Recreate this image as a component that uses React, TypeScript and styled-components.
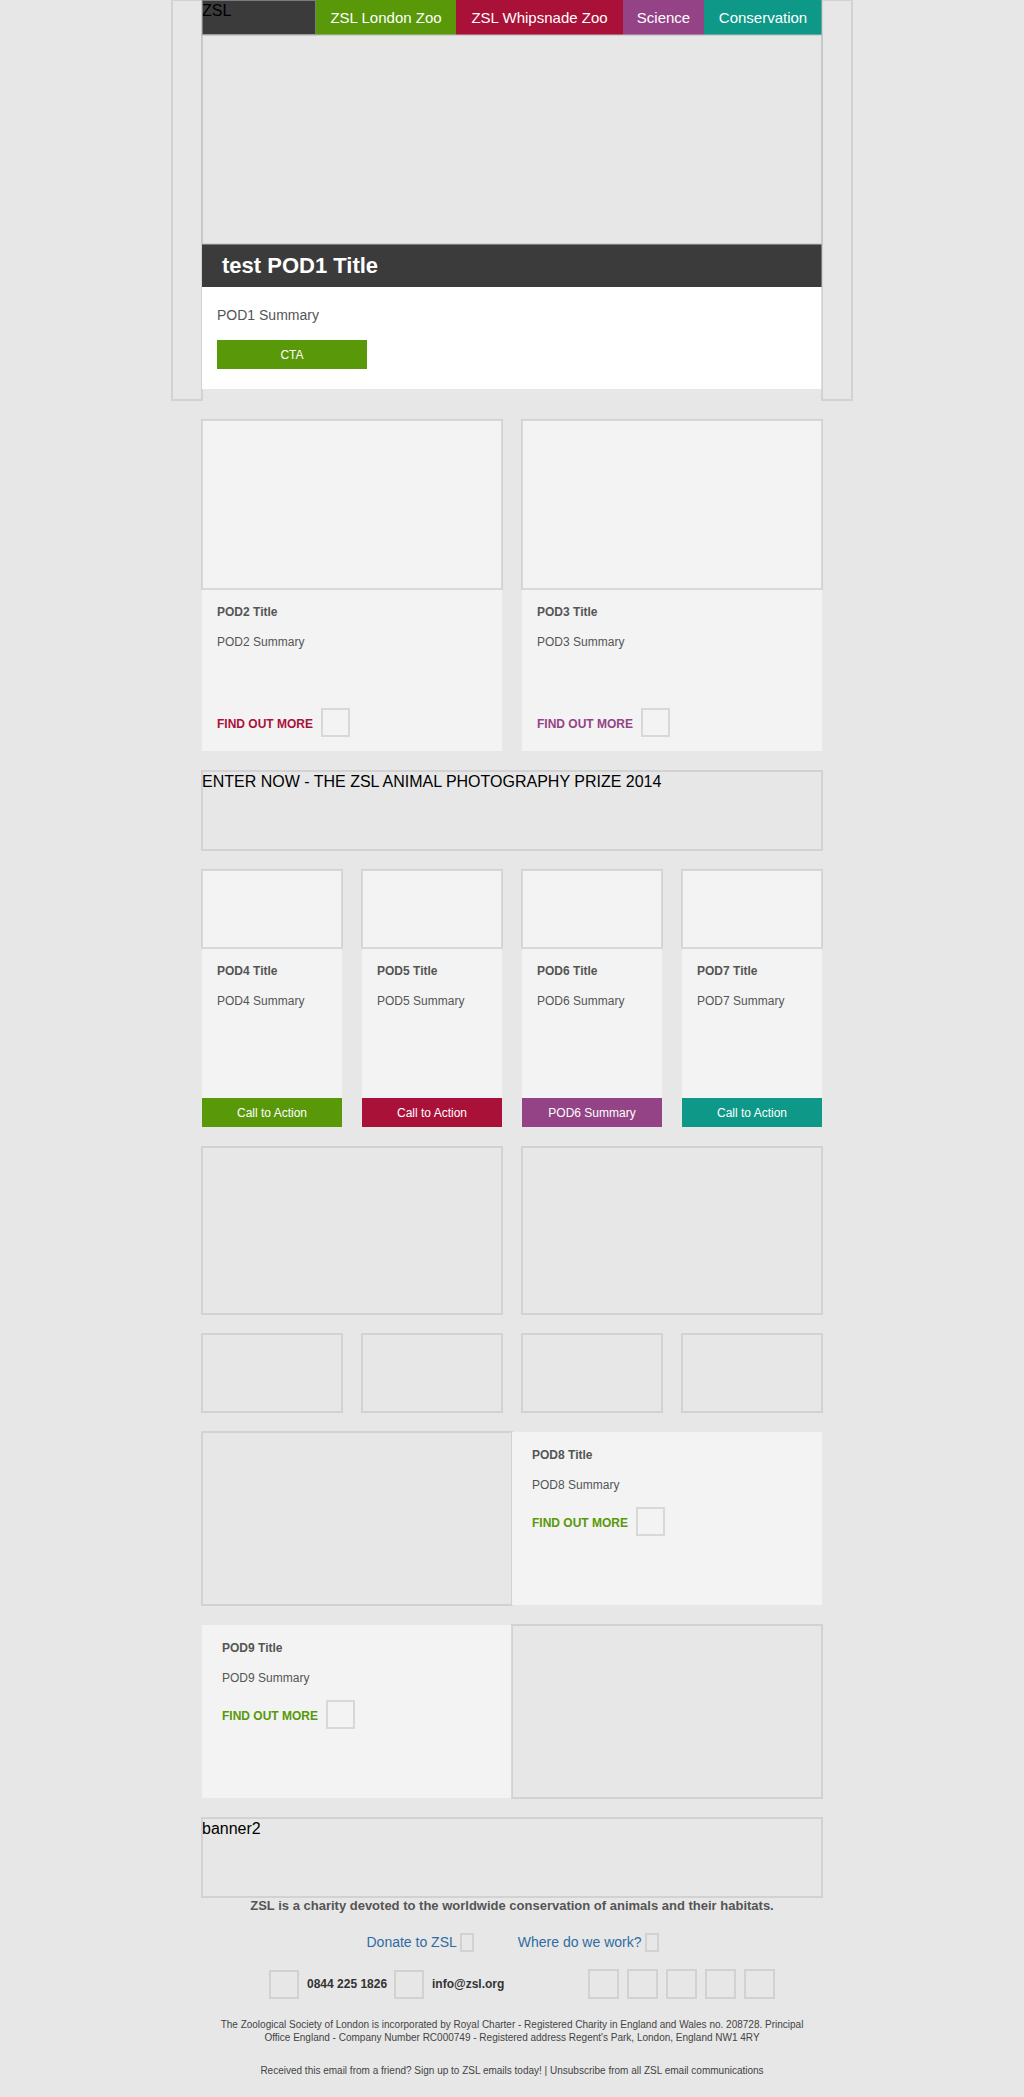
import React from "react";
import styled, { createGlobalStyle } from "styled-components";

const color = {
  page: "#e7e7e7",
  card: "#f3f3f3",
  dark: "#3b3b3b",
  text: "#555555",
  line: "rgba(190, 190, 190, 0.5)",
  link: "#2f6ca3",
  green: "#599809",
  red: "#aa1138",
  purple: "#934386",
  teal: "#0d9888",
};

const GlobalStyle = createGlobalStyle`
  * { box-sizing: border-box; }
  body {
    margin: 0;
    background: ${color.page};
    color: ${color.text};
    font-family: "Liberation Sans", Arial, Helvetica, sans-serif;
    font-size: 12px;
    line-height: 15px;
  }
  a { color: inherit; text-decoration: none; }
  h1, h2, p { margin: 0; }
`;

const Top = styled.header`
  display: grid;
  grid-template-columns: 30px minmax(0, 620px) 30px;
  justify-content: center;
`;

const Picture = styled.div<{ $height: number }>`
  height: ${(p) => p.$height}px;
  outline: 2px solid ${color.line};
  outline-offset: -1px;
  color: #000;
  font-size: 16px;
  line-height: 22px;
`;

const Nav = styled.nav`
  display: grid;
  grid-template-columns: 114fr 140fr 167fr 81fr 118fr;
  background: ${color.dark};
`;

const NavLink = styled.a<{ $bg: string }>`
  display: flex;
  align-items: center;
  justify-content: center;
  background: ${(p) => p.$bg};
  color: #fff;
  font-size: 15px;
  white-space: nowrap;
`;

const HeroTitle = styled.h1`
  padding: 0 20px;
  background: ${color.dark};
  color: #fff;
  font-size: 22px;
  line-height: 43px;
`;

const HeroBody = styled.div`
  display: flex;
  flex-direction: column;
  align-items: flex-start;
  gap: 17px;
  padding: 20px 15px;
  background: #fff;
`;

const HeroSummary = styled.p`
  font-size: 14px;
  line-height: 16px;
`;

const Button = styled.a<{ $bg: string; $width?: string }>`
  display: block;
  width: ${(p) => p.$width ?? "auto"};
  padding: 8px 0 6px;
  background: ${(p) => p.$bg};
  color: #fff;
  text-align: center;
`;

const Main = styled.main`
  display: grid;
  gap: 20px;
  max-width: 620px;
  margin: 20px auto 0;
`;

const Columns = styled.div<{ $count: number; $gap?: number }>`
  display: grid;
  grid-template-columns: repeat(${(p) => p.$count}, minmax(0, 1fr));
  gap: ${(p) => p.$gap ?? 20}px;
`;

const Card = styled.article<{ $min?: number }>`
  display: flex;
  flex-direction: column;
  min-height: ${(p) => p.$min ?? 0}px;
  background: ${color.card};
`;

const CardBody = styled.div<{ $side?: number; $spread?: boolean }>`
  display: flex;
  flex: 1;
  flex-direction: column;
  gap: 15px;
  padding: 16px ${(p) => p.$side ?? 15}px 15px;

  & > :last-child {
    margin-top: ${(p) => (p.$spread ? "auto" : "0")};
  }
`;

const CardTitle = styled.h2`
  font-size: 12px;
`;

const MoreLink = styled.a<{ $color: string }>`
  display: flex;
  align-items: center;
  gap: 9px;
  color: ${(p) => p.$color};
  font-weight: bold;

  span {
    padding-top: 3px;
  }
`;

const Icon = styled.i<{ $w: number; $h: number }>`
  flex: none;
  width: ${(p) => p.$w}px;
  height: ${(p) => p.$h}px;
  outline: 2px solid ${color.line};
  outline-offset: -1px;
`;

const Footer = styled.footer`
  max-width: 620px;
  margin: 0 auto;
  padding-bottom: 20px;
  text-align: center;
`;

const Mission = styled.p`
  font-size: 13px;
  font-weight: bold;
  line-height: 18px;
`;

const LinkRow = styled.div`
  display: flex;
  flex-wrap: wrap;
  justify-content: center;
  gap: 45px;
  margin-top: 18px;
`;

const FooterLink = styled.a`
  display: flex;
  align-items: center;
  gap: 4px;
  color: ${color.link};
  font-size: 14px;
  line-height: 18px;
`;

const ContactRow = styled.div`
  display: flex;
  flex-wrap: wrap;
  justify-content: space-between;
  gap: 10px;
  margin-top: 19px;
  padding: 0 48px 0 68px;
`;

const Contacts = styled.div`
  display: grid;
  grid-template-columns: 125px auto;
`;

const Contact = styled.a`
  display: flex;
  align-items: center;
  gap: 9px;
  color: #333;
  font-weight: bold;
`;

const Social = styled.div`
  display: flex;
  gap: 10px;
`;

const Legal = styled.p`
  margin-top: 20px;
  padding: 0 6px;
  color: #444;
  font-size: 10px;
  line-height: 13px;
`;

function FindOutMore({ tone }: { tone: string }) {
  return (
    <MoreLink href="#" $color={tone}>
      <span>FIND OUT MORE</span>
      <Icon $w={27} $h={27} />
    </MoreLink>
  );
}

function PodText({ n }: { n: number }) {
  return (
    <>
      <CardTitle>POD{n} Title</CardTitle>
      <p>POD{n} Summary</p>
    </>
  );
}

const smallPods = [
  { n: 4, bg: color.green, label: "Call to Action" },
  { n: 5, bg: color.red, label: "Call to Action" },
  { n: 6, bg: color.purple, label: "POD6 Summary" },
  { n: 7, bg: color.teal, label: "Call to Action" },
];

export default function App() {
  return (
    <>
      <GlobalStyle />
      <Top>
        <Picture $height={400} />
        <div>
          <Nav>
            <Picture $height={35}>ZSL</Picture>
            <NavLink href="#" $bg={color.green}>ZSL London Zoo</NavLink>
            <NavLink href="#" $bg={color.red}>ZSL Whipsnade Zoo</NavLink>
            <NavLink href="#" $bg={color.purple}>Science</NavLink>
            <NavLink href="#" $bg={color.teal}>Conservation</NavLink>
          </Nav>
          <Picture $height={209} />
          <HeroTitle>test POD1 Title</HeroTitle>
          <HeroBody>
            <HeroSummary>POD1 Summary</HeroSummary>
            <Button href="#" $bg={color.green} $width="150px">CTA</Button>
          </HeroBody>
        </div>
        <Picture $height={400} />
      </Top>

      <Main>
        <Columns $count={2}>
          {[
            { n: 2, tone: color.red },
            { n: 3, tone: color.purple },
          ].map(({ n, tone }) => (
            <Card key={n} $min={331}>
              <Picture $height={169} />
              <CardBody $spread>
                <PodText n={n} />
                <FindOutMore tone={tone} />
              </CardBody>
            </Card>
          ))}
        </Columns>

        <Picture $height={79}>ENTER NOW - THE ZSL ANIMAL PHOTOGRAPHY PRIZE 2014</Picture>

        <Columns $count={4}>
          {smallPods.map(({ n, bg, label }) => (
            <Card key={n} $min={257}>
              <Picture $height={78} />
              <CardBody>
                <PodText n={n} />
              </CardBody>
              <Button href="#" $bg={bg}>{label}</Button>
            </Card>
          ))}
        </Columns>

        <Columns $count={2}>
          <Picture $height={167} />
          <Picture $height={167} />
        </Columns>

        <Columns $count={4}>
          {smallPods.map(({ n }) => (
            <Picture key={n} $height={78} />
          ))}
        </Columns>

        <Columns $count={2} $gap={0}>
          <Picture $height={173} />
          <Card>
            <CardBody $side={20}>
              <PodText n={8} />
              <FindOutMore tone={color.green} />
            </CardBody>
          </Card>
        </Columns>

        <Columns $count={2} $gap={0}>
          <Card>
            <CardBody $side={20}>
              <PodText n={9} />
              <FindOutMore tone={color.green} />
            </CardBody>
          </Card>
          <Picture $height={173} />
        </Columns>

        <Picture $height={79}>banner2</Picture>
      </Main>

      <Footer>
        <Mission>
          ZSL is a charity devoted to the worldwide conservation of animals and their habitats.
        </Mission>
        <LinkRow>
          <FooterLink href="#">Donate to ZSL<Icon $w={12} $h={17} /></FooterLink>
          <FooterLink href="#">Where do we work?<Icon $w={12} $h={17} /></FooterLink>
        </LinkRow>
        <ContactRow>
          <Contacts>
            <Contact href="#"><Icon $w={28} $h={27} />0844 225 1826</Contact>
            <Contact href="#"><Icon $w={28} $h={27} />info@zsl.org</Contact>
          </Contacts>
          <Social>
            {[1, 2, 3, 4, 5].map((n) => (
              <Icon as="a" href="#" key={n} $w={29} $h={28} />
            ))}
          </Social>
        </ContactRow>
        <Legal>
          The Zoological Society of London is incorporated by Royal Charter - Registered Charity in
          England and Wales no. 208728. Principal Office England - Company Number RC000749 -
          Registered address Regent's Park, London, England NW1 4RY
        </Legal>
        <Legal>
          Received this email from a friend? <a href="#">Sign up to ZSL emails today!</a> |{" "}
          <a href="#">Unsubscribe from all ZSL email communications</a>
        </Legal>
      </Footer>
    </>
  );
}
